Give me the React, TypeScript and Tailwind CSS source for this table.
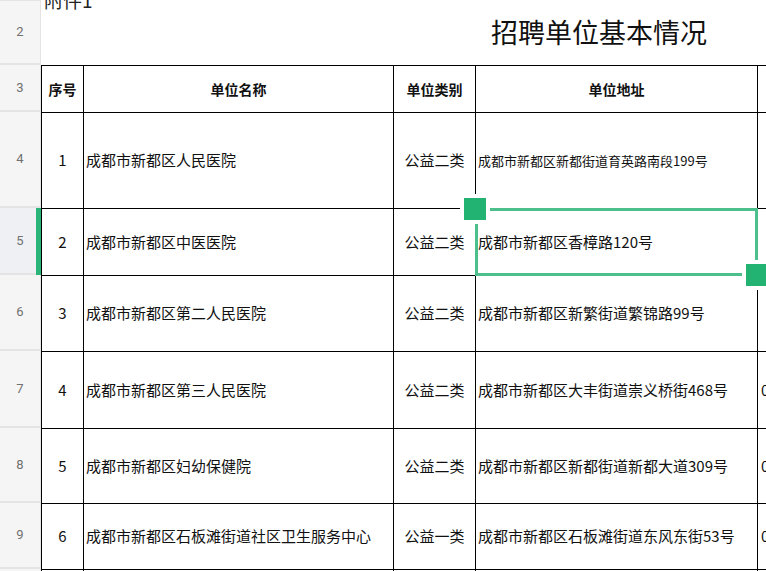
import React from "react";

const rows = [
  { n: "4", h: 96, a: "1", b: "成都市新都区人民医院", c: "公益二类", d: "成都市新都区新都街道育英路南段199号", small: true, e: "" },
  { n: "5", h: 67, a: "2", b: "成都市新都区中医医院", c: "公益二类", d: "成都市新都区香樟路120号", e: "", sel: true },
  { n: "6", h: 76, a: "3", b: "成都市新都区第二人民医院", c: "公益二类", d: "成都市新都区新繁街道繁锦路99号", e: "" },
  { n: "7", h: 77, a: "4", b: "成都市新都区第三人民医院", c: "公益二类", d: "成都市新都区大丰街道崇义桥街468号", e: "0" },
  { n: "8", h: 75, a: "5", b: "成都市新都区妇幼保健院", c: "公益二类", d: "成都市新都区新都街道新都大道309号", e: "0" },
  { n: "9", h: 66, a: "6", b: "成都市新都区石板滩街道社区卫生服务中心", c: "公益一类", d: "成都市新都区石板滩街道东风东街53号", e: "0" },
];

const font = { fontFamily: '"Noto Sans CJK SC", "Noto Sans", sans-serif' };

function RowHeader({ n, sel }: { n: string; sel?: boolean }) {
  return (
    <div
      className={`relative w-[41px] shrink-0 flex items-center justify-center border-r border-b-2 border-[#e4e4e4] text-[13px] text-[#707070] ${
        sel ? "bg-[#eef0f4]" : "bg-[#f5f5f5]"
      }`}
      style={{ fontFamily: 'Roboto, "Noto Sans", sans-serif' }}
    >
      {n}
      {sel && <div className="absolute right-[-1px] top-0 bottom-[-2px] w-[5px] bg-[#2bb47a]" />}
    </div>
  );
}

export default function App() {
  return (
    <div className="relative w-[766px] h-[571px] overflow-hidden bg-white text-[#111]" style={font}>
      {/* row 1 remnant */}
      <div className="flex h-[1px]">
        <div className="w-[41px] bg-[#e4e4e4]" />
        <div className="flex-1" />
      </div>
      {/* row 2 */}
      <div className="flex h-[64px]">
        <RowHeader n="2" />
        <div className="flex-1 flex flex-col">
          <div className="ml-[3px] mt-[-11px] h-[20px] leading-[20px] text-[19px] text-[#222]">附件1</div>
          <div className="ml-[450px] mt-[4px] h-[36px] leading-[36px] text-[27px] text-[#111] whitespace-nowrap">
            招聘单位基本情况
          </div>
        </div>
      </div>
      {/* row 3 header */}
      <div className="flex h-[47px]">
        <RowHeader n="3" />
        <div className="flex-1 flex border-t border-l border-black">
          <div className="w-[42px] shrink-0 border-r border-black flex items-center justify-center text-[14px] font-bold">序号</div>
          <div className="w-[310px] shrink-0 border-r border-black flex items-center justify-center text-[14px] font-bold">单位名称</div>
          <div className="w-[82px] shrink-0 border-r border-black flex items-center justify-center text-[14px] font-bold">单位类别</div>
          <div className="w-[282px] shrink-0 border-r border-black flex items-center justify-center text-[14px] font-bold">单位地址</div>
          <div className="flex-1" />
        </div>
      </div>
      {rows.map((r) => (
        <div key={r.n} className="flex" style={{ height: r.h }}>
          <RowHeader n={r.n} sel={r.sel} />
          <div className="flex-1 flex border-t border-l border-black">
            <div className="w-[42px] shrink-0 border-r border-black flex items-center justify-center text-[15px]">{r.a}</div>
            <div className="w-[310px] shrink-0 border-r border-black flex items-center pl-[2px] text-[15px] whitespace-nowrap">{r.b}</div>
            <div className="w-[82px] shrink-0 border-r border-black flex items-center justify-center text-[15px] whitespace-nowrap">{r.c}</div>
            <div
              className={`w-[282px] shrink-0 border-r border-black flex items-center pl-[2px] whitespace-nowrap ${
                r.small ? "text-[13px]" : "text-[15px]"
              }`}
            >
              {r.d}
            </div>
            <div className="flex-1 flex items-center pl-[3px] text-[15px] overflow-hidden">{r.e}</div>
          </div>
        </div>
      ))}
      <div className="flex h-[4px]">
        <RowHeader n="" />
        <div className="flex-1 flex border-t border-l border-black">
          <div className="w-[42px] shrink-0 border-r border-black" />
          <div className="w-[310px] shrink-0 border-r border-black" />
          <div className="w-[82px] shrink-0 border-r border-black" />
          <div className="w-[282px] shrink-0 border-r border-black" />
        </div>
      </div>

      {/* selection overlay */}
      <div className="absolute left-[475px] top-[208px] w-[283px] h-[68px] border-[3px] border-[#4cbf8c]" />
      <div className="absolute left-[460px] top-[194px] w-[30px] h-[30px] border-[4px] border-white bg-[#22b373]" />
      <div className="absolute left-[742px] top-[260px] w-[30px] h-[30px] border-[4px] border-white bg-[#22b373]" />
    </div>
  );
}
